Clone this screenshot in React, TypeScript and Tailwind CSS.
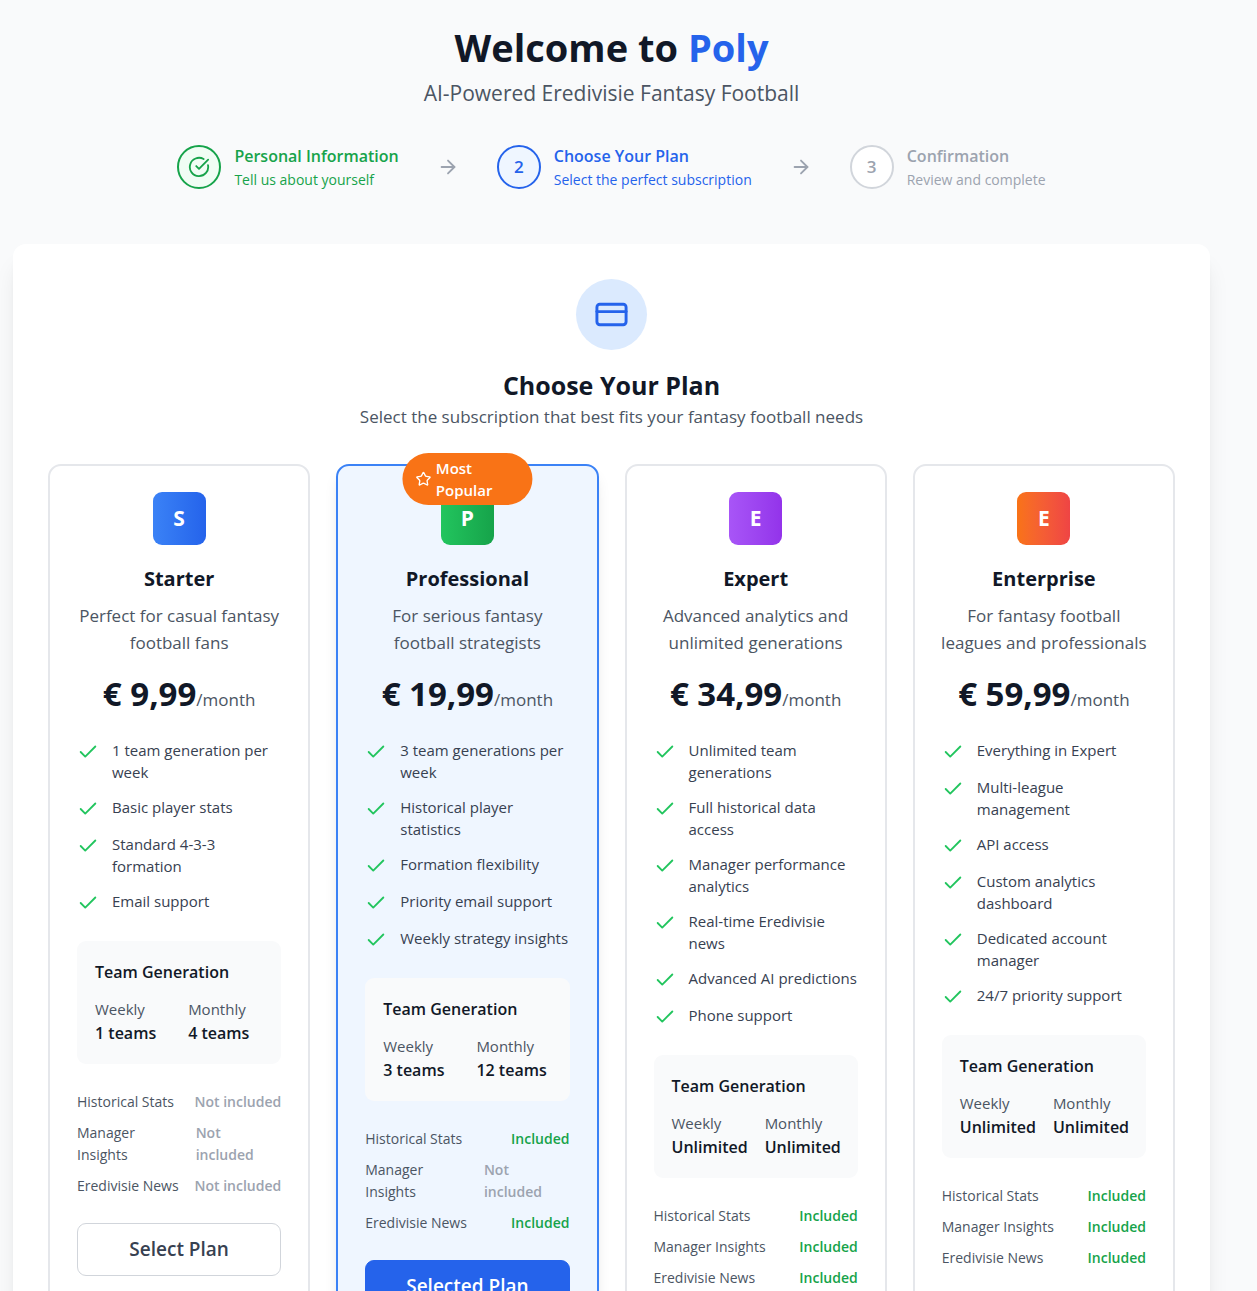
import { ArrowRight, Check, CircleCheckBig, CreditCard, Star } from "lucide-react";

type Step = { title: string; text: string; state: "done" | "current" | "todo" };

type Plan = {
  name: string;
  badge: string;
  description: string;
  price: string;
  features: string[];
  weekly: string;
  monthly: string;
  included: [string, boolean][];
  popular?: boolean;
};

const steps: Step[] = [
  { title: "Personal Information", text: "Tell us about yourself", state: "done" },
  { title: "Choose Your Plan", text: "Select the perfect subscription", state: "current" },
  { title: "Confirmation", text: "Review and complete", state: "todo" },
];

const stepText = {
  done: "text-[#16a34a]",
  current: "text-[#2563eb]",
  todo: "text-[#9ca3af]",
};

const stepCircle = {
  done: "border-[#16a34a] bg-[#f0fdf4]",
  current: "border-[#2563eb] bg-[#eff6ff]",
  todo: "border-[#d1d5db] bg-white",
};

const plans: Plan[] = [
  {
    name: "Starter",
    badge: "from-[#3b82f6] to-[#2563eb]",
    description: "Perfect for casual fantasy football fans",
    price: "€ 9,99",
    features: [
      "1 team generation per week",
      "Basic player stats",
      "Standard 4-3-3 formation",
      "Email support",
    ],
    weekly: "1 teams",
    monthly: "4 teams",
    included: [
      ["Historical Stats", false],
      ["Manager Insights", false],
      ["Eredivisie News", false],
    ],
  },
  {
    name: "Professional",
    badge: "from-[#22c55e] to-[#16a34a]",
    description: "For serious fantasy football strategists",
    price: "€ 19,99",
    features: [
      "3 team generations per week",
      "Historical player statistics",
      "Formation flexibility",
      "Priority email support",
      "Weekly strategy insights",
    ],
    weekly: "3 teams",
    monthly: "12 teams",
    included: [
      ["Historical Stats", true],
      ["Manager Insights", false],
      ["Eredivisie News", true],
    ],
    popular: true,
  },
  {
    name: "Expert",
    badge: "from-[#a855f7] to-[#9333ea]",
    description: "Advanced analytics and unlimited generations",
    price: "€ 34,99",
    features: [
      "Unlimited team generations",
      "Full historical data access",
      "Manager performance analytics",
      "Real-time Eredivisie news",
      "Advanced AI predictions",
      "Phone support",
    ],
    weekly: "Unlimited",
    monthly: "Unlimited",
    included: [
      ["Historical Stats", true],
      ["Manager Insights", true],
      ["Eredivisie News", true],
    ],
  },
  {
    name: "Enterprise",
    badge: "from-[#f97316] to-[#ef4444]",
    description: "For fantasy football leagues and professionals",
    price: "€ 59,99",
    features: [
      "Everything in Expert",
      "Multi-league management",
      "API access",
      "Custom analytics dashboard",
      "Dedicated account manager",
      "24/7 priority support",
    ],
    weekly: "Unlimited",
    monthly: "Unlimited",
    included: [
      ["Historical Stats", true],
      ["Manager Insights", true],
      ["Eredivisie News", true],
    ],
  },
];

function Stepper() {
  return (
    <ol className="mb-[53px] flex items-center justify-center">
      {steps.map((step, i) => (
        <li key={step.title} className="flex items-center">
          {i > 0 && <ArrowRight className="mx-[38px] size-[22px] text-[#9ca3af]" />}
          <div className={`flex items-center gap-[13px] ${stepText[step.state]}`}>
            <div
              className={`flex size-11 shrink-0 items-center justify-center rounded-full border-2 text-[17px] font-semibold ${stepCircle[step.state]}`}
            >
              {step.state === "done" ? <CircleCheckBig className="size-[22px]" /> : i + 1}
            </div>
            <div className="whitespace-nowrap">
              <p className="text-[16px] leading-[26px] font-semibold">{step.title}</p>
              <p className="text-[14px] leading-[22px]">{step.text}</p>
            </div>
          </div>
        </li>
      ))}
    </ol>
  );
}

function PlanCard({ plan }: { plan: Plan }) {
  return (
    <article
      className={`relative rounded-[13px] border-2 px-[27px] py-[26px] ${
        plan.popular ? "border-[#3b82f6] bg-[#eff6ff] shadow-lg" : "border-[#e5e7eb] bg-white"
      }`}
    >
      {plan.popular && (
        <div className="absolute -top-[13px] left-1/2 flex -translate-x-1/2 items-center gap-1 rounded-full bg-[#f97316] px-[13px] py-1 text-[15px] leading-[22px] font-semibold text-white">
          <Star className="size-4 shrink-0" />
          <span>Most Popular</span>
        </div>
      )}
      <div className="mb-[19px] text-center">
        <div
          className={`mx-auto mb-[18px] flex size-[53px] items-center justify-center rounded-[9px] bg-linear-to-r text-[21px] font-bold text-white ${plan.badge}`}
        >
          {plan.name[0]}
        </div>
        <h3 className="mb-2 text-[20px] leading-[31px] font-bold text-[#111827]">{plan.name}</h3>
        <p className="-mx-1 mb-[18px] text-[17px] leading-[27px] text-[#4b5563]">{plan.description}</p>
        <p className="leading-10 text-[#4b5563]">
          <span className="text-[33px] font-bold text-[#111827]">{plan.price}</span>
          <span className="text-[17px]">/month</span>
        </p>
      </div>
      <ul className="mb-[27px] space-y-[13px]">
        {plan.features.map((feature) => (
          <li key={feature} className="flex items-start gap-[13px]">
            <Check className="mt-0.5 size-[22px] shrink-0 text-[#22c55e]" />
            <span className="text-[15px] leading-[22px] text-[#374151]">{feature}</span>
          </li>
        ))}
      </ul>
      <section className="mb-[27px] rounded-[9px] bg-[#f9fafb] p-[18px]">
        <h4 className="mb-[13px] text-[16px] leading-[26px] font-semibold text-[#111827]">
          Team Generation
        </h4>
        <dl className="grid grid-cols-2 gap-[18px]">
          <div>
            <dt className="text-[15px] leading-[22px] text-[#4b5563]">Weekly</dt>
            <dd className="text-[16px] leading-[26px] font-semibold text-[#111827]">{plan.weekly}</dd>
          </div>
          <div>
            <dt className="text-[15px] leading-[22px] text-[#4b5563]">Monthly</dt>
            <dd className="text-[16px] leading-[26px] font-semibold text-[#111827]">{plan.monthly}</dd>
          </div>
        </dl>
      </section>
      <dl className="mb-[26px] space-y-[9px] text-[14px] leading-[22px]">
        {plan.included.map(([label, on]) => (
          <div key={label} className="flex justify-between gap-2">
            <dt className="text-[#4b5563]">{label}</dt>
            <dd className={on ? "font-semibold text-[#16a34a]" : "font-semibold text-[#9ca3af]"}>
              {on ? "Included" : "Not included"}
            </dd>
          </div>
        ))}
      </dl>
      <button
        type="button"
        className={`w-full rounded-[9px] border py-3 text-[19px] leading-[27px] font-semibold ${
          plan.popular
            ? "border-[#2563eb] bg-[#2563eb] text-white"
            : "border-[#d1d5db] bg-white text-[#374151]"
        }`}
      >
        {plan.popular ? "Selected Plan" : "Select Plan"}
      </button>
    </article>
  );
}

export default function App() {
  return (
    <div className="min-h-screen bg-[#f9fafb] pt-[26px] pr-[47px] pb-[26px] pl-[13px] font-['Open_Sans','Noto_Sans',sans-serif]">
      <header className="mb-[35px] text-center">
        <h1 className="mb-[10px] text-[38px] leading-[42px] font-bold text-[#111827]">
          Welcome to <span className="text-[#2563eb]">Poly</span>
        </h1>
        <p className="text-[21px] leading-[30px] text-[#4b5563]">
          AI-Powered Eredivisie Fantasy Football
        </p>
      </header>
      <Stepper />
      <main className="rounded-[13px] bg-white p-[35px] shadow-xl">
        <div className="mb-[34px] text-center">
          <div className="mx-auto mb-[18px] flex size-[71px] items-center justify-center rounded-full bg-[#dbeafe]">
            <CreditCard className="size-[35px] text-[#2563eb]" />
          </div>
          <h2 className="text-[25px] leading-[35px] font-bold text-[#111827]">Choose Your Plan</h2>
          <p className="text-[17px] leading-[27px] text-[#4b5563]">
            Select the subscription that best fits your fantasy football needs
          </p>
        </div>
        <div className="grid grid-cols-4 gap-[26px]">
          {plans.map((plan) => (
            <PlanCard key={plan.name} plan={plan} />
          ))}
        </div>
      </main>
    </div>
  );
}
